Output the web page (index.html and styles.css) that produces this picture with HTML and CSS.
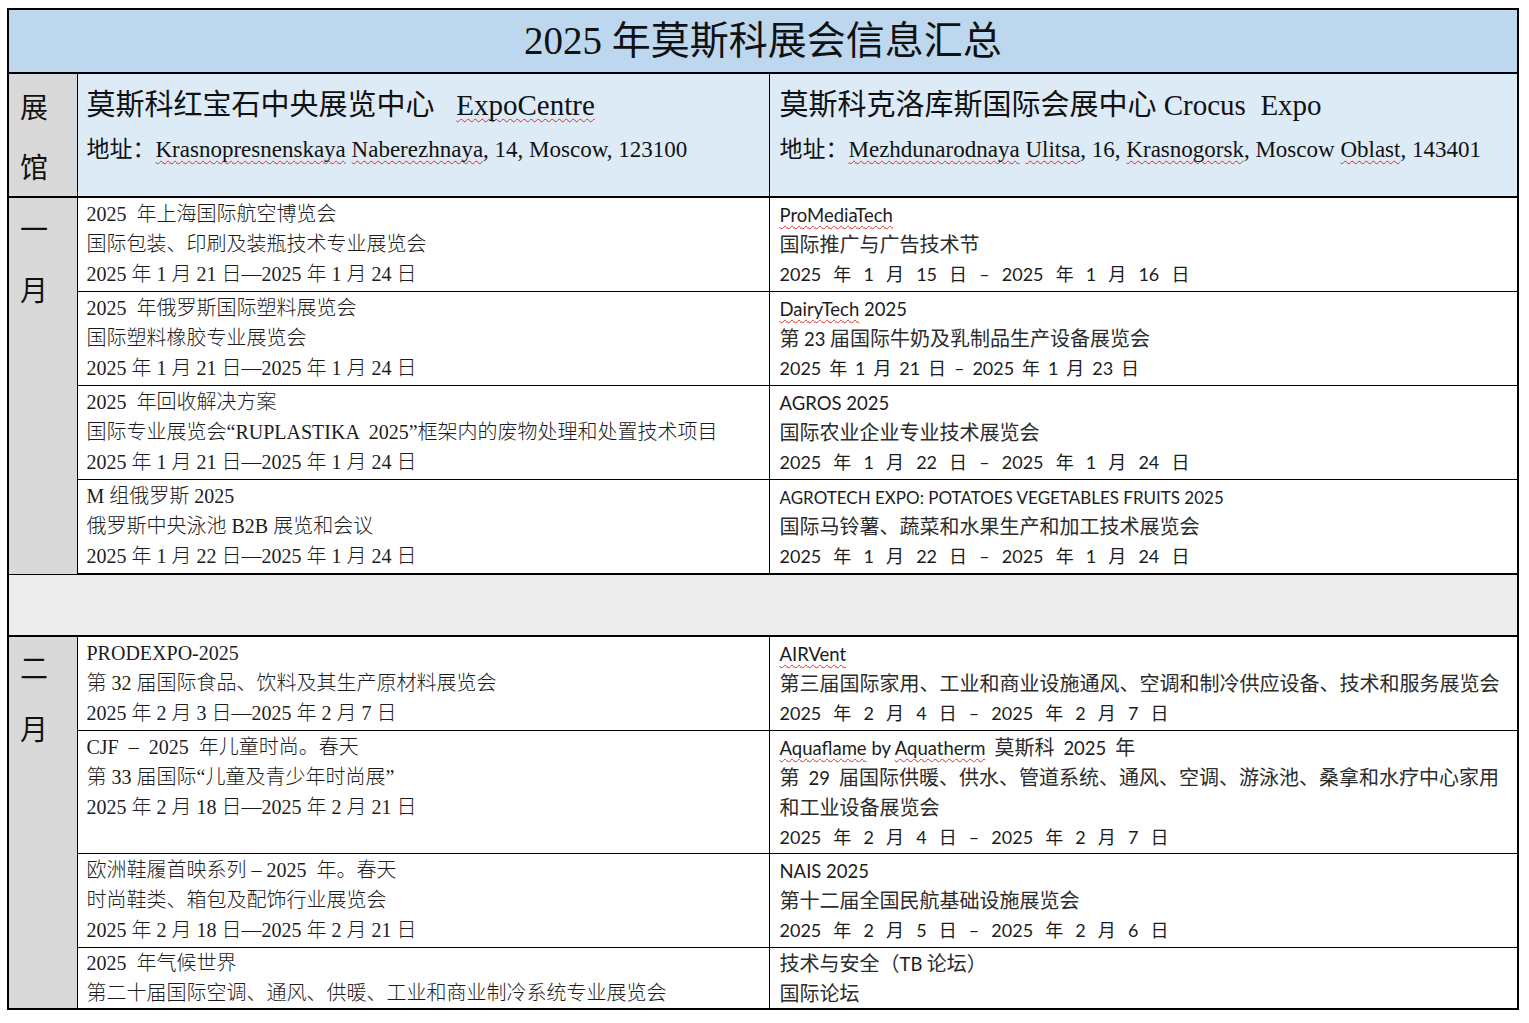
FILE: index.html
```html
<!DOCTYPE html>
<html lang="zh-CN">
<head>
<meta charset="utf-8">
<title>2025年莫斯科展会信息汇总</title>
<link rel="stylesheet" href="styles.css">
</head>
<body>
<table class="sheet">
  <colgroup>
    <col class="c-m">
    <col class="c-l">
    <col class="c-r">
  </colgroup>
  <tbody>
    <tr class="thick">
      <td class="title" colspan="3">2025 年莫斯科展会信息汇总</td>
    </tr>
    <tr class="thick">
      <td class="month head-month">展<br>馆</td>
      <td class="venue">
        <div class="vname">莫斯科红宝石中央展览中心   <span class="sp">ExpoCentre</span></div>
        <div class="vaddr">地址：<span class="sp">Krasnopresnenskaya</span> <span class="sp">Naberezhnaya</span>, 14, Moscow, 123100</div>
      </td>
      <td class="venue venue-r">
        <div class="vname">莫斯科克洛库斯国际会展中心 Crocus  Expo</div>
        <div class="vaddr">地址：<span class="sp">Mezhdunarodnaya</span> <span class="sp">Ulitsa</span>, 16, <span class="sp">Krasnogorsk</span>, Moscow <span class="sp">Oblast</span>, 143401</div>
      </td>
    </tr>

    <tr>
      <td class="month" rowspan="4">一<br>月</td>
      <td class="lc">
        <div class="ln">2025  年上海国际航空博览会</div>
        <div class="ln">国际包装、印刷及装瓶技术专业展览会</div>
        <div class="ln">2025 年 1 月 21 日—2025 年 1 月 24 日</div>
      </td>
      <td class="rc">
        <div class="ln"><span class="en sp">ProMediaTech</span></div>
        <div class="ln">国际推广与广告技术节</div>
        <div class="ln rd">2025 年 1 月 15 日 – 2025 年 1 月 16 日</div>
      </td>
    </tr>
    <tr>
      <td class="lc">
        <div class="ln">2025  年俄罗斯国际塑料展览会</div>
        <div class="ln">国际塑料橡胶专业展览会</div>
        <div class="ln">2025 年 1 月 21 日—2025 年 1 月 24 日</div>
      </td>
      <td class="rc">
        <div class="ln"><span class="en"><span class="sp">DairyTech</span> 2025</span></div>
        <div class="ln">第 <span class="en">23</span> 届国际牛奶及乳制品生产设备展览会</div>
        <div class="ln rd rd-c">2025 年 1 月 21 日 – 2025 年 1 月 23 日</div>
      </td>
    </tr>
    <tr>
      <td class="lc">
        <div class="ln">2025  年回收解决方案</div>
        <div class="ln">国际专业展览会“RUPLASTIKA  2025”框架内的废物处理和处置技术项目</div>
        <div class="ln">2025 年 1 月 21 日—2025 年 1 月 24 日</div>
      </td>
      <td class="rc">
        <div class="ln"><span class="en">AGROS 2025</span></div>
        <div class="ln">国际农业企业专业技术展览会</div>
        <div class="ln rd">2025 年 1 月 22 日 – 2025 年 1 月 24 日</div>
      </td>
    </tr>
    <tr class="thick">
      <td class="lc">
        <div class="ln">M 组俄罗斯 2025</div>
        <div class="ln">俄罗斯中央泳池 B2B 展览和会议</div>
        <div class="ln">2025 年 1 月 22 日—2025 年 1 月 24 日</div>
      </td>
      <td class="rc">
        <div class="ln"><span class="en cap">AGROTECH EXPO: POTATOES VEGETABLES FRUITS 2025</span></div>
        <div class="ln">国际马铃薯、蔬菜和水果生产和加工技术展览会</div>
        <div class="ln rd">2025 年 1 月 22 日 – 2025 年 1 月 24 日</div>
      </td>
    </tr>

    <tr class="thick">
      <td class="spacer" colspan="3"></td>
    </tr>

    <tr>
      <td class="month month-b" rowspan="4">二<br>月</td>
      <td class="lc">
        <div class="ln">PRODEXPO-2025</div>
        <div class="ln">第 32 届国际食品、饮料及其生产原材料展览会</div>
        <div class="ln">2025 年 2 月 3 日—2025 年 2 月 7 日</div>
      </td>
      <td class="rc">
        <div class="ln"><span class="en sp">AIRVent</span></div>
        <div class="ln">第三届国际家用、工业和商业设施通风、空调和制冷供应设备、技术和服务展览会</div>
        <div class="ln rd">2025 年 2 月 4 日 – 2025 年 2 月 7 日</div>
      </td>
    </tr>
    <tr class="snug">
      <td class="lc">
        <div class="ln">CJF  –  2025  年儿童时尚。春天</div>
        <div class="ln">第 33 届国际“儿童及青少年时尚展”</div>
        <div class="ln">2025 年 2 月 18 日—2025 年 2 月 21 日</div>
      </td>
      <td class="rc">
        <div class="ln"><span class="en"><span class="sp">Aquaflame</span> by <span class="sp">Aquatherm</span></span>  莫斯科  <span class="en">2025</span>  年</div>
        <div class="ln">第  <span class="en">29</span>  届国际供暖、供水、管道系统、通风、空调、游泳池、桑拿和水疗中心家用</div>
        <div class="ln">和工业设备展览会</div>
        <div class="ln rd">2025 年 2 月 4 日 – 2025 年 2 月 7 日</div>
      </td>
    </tr>
    <tr>
      <td class="lc">
        <div class="ln">欧洲鞋履首映系列 – 2025  年。春天</div>
        <div class="ln">时尚鞋类、箱包及配饰行业展览会</div>
        <div class="ln">2025 年 2 月 18 日—2025 年 2 月 21 日</div>
      </td>
      <td class="rc">
        <div class="ln"><span class="en">NAIS 2025</span></div>
        <div class="ln">第十二届全国民航基础设施展览会</div>
        <div class="ln rd">2025 年 2 月 5 日 – 2025 年 2 月 6 日</div>
      </td>
    </tr>
    <tr class="tight">
      <td class="lc">
        <div class="ln">2025  年气候世界</div>
        <div class="ln">第二十届国际空调、通风、供暖、工业和商业制冷系统专业展览会</div>
      </td>
      <td class="rc">
        <div class="ln">技术与安全（<span class="en">TB</span> 论坛）</div>
        <div class="ln">国际论坛</div>
      </td>
    </tr>
  </tbody>
</table>
</body>
</html>
```

FILE: styles.css
```css
html, body {
  margin: 0;
  padding: 0;
  background: #ffffff;
}

body {
  color: #1c1c1c;
  font-family: "Liberation Serif", "Noto Sans CJK SC", serif;
}

.sheet {
  margin: 8px 0 0 7px;
  border-collapse: collapse;
  table-layout: fixed;
  width: 1510px;
  border: 2px solid #000;
}

.c-m { width: 69px; }
.c-l { width: 692px; }
.c-r { width: 749px; }

.sheet td {
  padding: 0;
  border: 1px solid #000;
  vertical-align: top;
}

.sheet tr.thick > td {
  border-bottom: 2px solid #000;
}

.title {
  background: #bdd7ee;
  height: 62px;
  line-height: 62px;
  text-align: center;
  font-size: 39px;
  color: #111;
  vertical-align: middle !important;
}

.month {
  background: #d9d9d9;
  font-family: "Noto Sans CJK SC", sans-serif;
  font-size: 28px;
  line-height: 61px;
  padding-left: 11px !important;
  color: #111;
}

.head-month {
  line-height: 60px;
  padding-top: 2px !important;
}

.venue {
  background: #ddebf7;
  height: 113px;
  padding: 9px 8px 0 9px !important;
  color: #111;
}

.venue-r {
  padding-left: 10px !important;
}

.vname {
  font-size: 29px;
  line-height: 44px;
  white-space: pre;
}

.vaddr {
  font-size: 23px;
  line-height: 46px;
  white-space: pre;
}

.lc {
  padding: 1px 6px 2px 9px !important;
  font-size: 20px;
  font-weight: 300;
}

.rc {
  padding: 1px 6px 2px 10px !important;
  font-family: "Noto Sans CJK SC", sans-serif;
  font-size: 20px;
  font-weight: 400;
  color: #2c2c2c;
}

.sheet tr.snug > td.lc,
.sheet tr.snug > td.rc {
  padding-top: 1px !important;
  padding-bottom: 1px !important;
}

.sheet tr.tight > td.lc,
.sheet tr.tight > td.rc {
  padding-top: 0 !important;
  padding-bottom: 0 !important;
}

.ln {
  line-height: 30px;
  height: 30px;
  white-space: pre;
}

.en {
  font-family: "Lato", "Noto Sans CJK SC", sans-serif;
  font-size: 18.5px;
  font-weight: 400;
  color: #1c1c1c;
}

.en.cap {
  font-size: 17px;
}

.rd {
  font-family: "Lato", "Noto Sans CJK SC", sans-serif;
  font-size: 18px;
  font-weight: 400;
  color: #1c1c1c;
  word-spacing: 7.5px;
}

.rd-c {
  word-spacing: 3.3px;
}

.sp {
  text-decoration-line: underline;
  text-decoration-style: wavy;
  text-decoration-color: #d8302a;
  text-decoration-thickness: 1px;
  text-underline-offset: 3px;
  text-decoration-skip-ink: none;
}

.spacer {
  background: #ededed;
  height: 60px;
}
```
